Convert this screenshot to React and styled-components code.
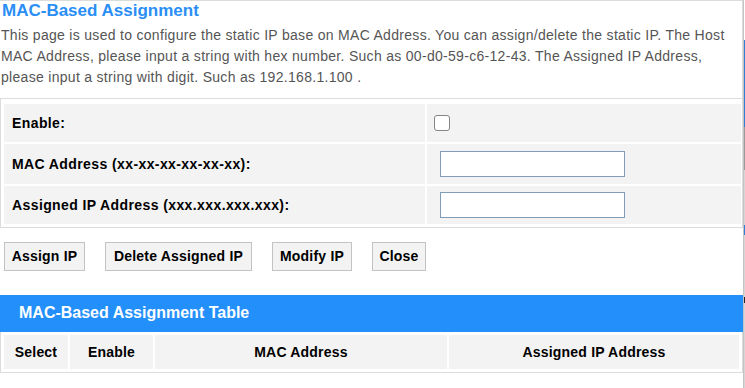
import React from "react";
import styled, { createGlobalStyle } from "styled-components";

const GlobalStyle = createGlobalStyle`
  html, body { margin: 0; padding: 0; background: #fff; }
  body { font-family: "Liberation Sans", Arial, sans-serif; }
  * { box-sizing: border-box; }
`;

const Page = styled.div`
  display: flex;
  width: 745px;
  height: 388px;
  overflow: hidden;
`;

const Main = styled.div`
  width: 743px;
  flex: none;
  display: flex;
  flex-direction: column;
`;

const EdgeStrip = styled.div`
  width: 2px;
  flex: none;
  display: flex;
`;

const EdgeLine = styled.div`
  width: 1px;
  height: 388px;
  background: ${(p) => p.$bg};
`;

const Intro = styled.div`
  border-top: 1px solid #dcdcdc;
  border-right: 1px solid #dcdcdc;
  border-bottom: 1px solid #dcdcdc;
  height: 99px;
  padding: 0 8px 0 1px;
`;

const Title = styled.div`
  color: #2a8ef5;
  font-weight: bold;
  font-size: 17px;
  line-height: 20px;
  margin-bottom: 4px;
  padding-left: 1px;
`;

const Desc = styled.div`
  color: #555;
  font-size: 14px;
  line-height: 21px;
  letter-spacing: 0.3px;
`;

const FormGrid = styled.div`
  display: grid;
  grid-template-columns: 421px 1fr;
  gap: 2px;
  border: 1px solid #dcdcdc;
  border-top: none;
  padding: 5px 1px 3px 3px;
`;

const Cell = styled.div`
  background: #f3f3f3;
  height: ${(p) => p.$h}px;
  display: flex;
  align-items: center;
  padding-left: ${(p) => p.$pl || 8}px;
  font-size: 14px;
  font-weight: ${(p) => (p.$bold ? "bold" : "normal")};
  letter-spacing: 0.4px;
  color: #000;
`;

const CheckBox = styled.span`
  display: inline-block;
  width: 16px;
  height: 16px;
  border: 1.5px solid #858585;
  border-radius: 3px;
  background: #fff;
`;

const TextInput = styled.input`
  width: 185px;
  height: 26px;
  border: 1px solid #7f9db9;
  background: #fff;
  padding: 0 4px;
  font-size: 14px;
  font-family: inherit;
  outline: none;
`;

const ButtonRow = styled.div`
  display: flex;
  gap: 20px;
  padding: 14px 0 0 4px;
  height: 67px;
`;

const Button = styled.button`
  width: ${(p) => p.$w}px;
  height: 29px;
  padding: 0 0 2px;
  background: #f3f3f3;
  border: 1px solid #c3c3c3;
  border-radius: 0;
  font-family: inherit;
  font-weight: bold;
  font-size: 14px;
  letter-spacing: 0.2px;
  color: #000;
  cursor: pointer;
`;

const TableBar = styled.div`
  height: 37px;
  background: #238ffa;
  color: #fff;
  font-weight: bold;
  font-size: 16px;
  display: flex;
  align-items: center;
  padding-left: 19px;
  padding-bottom: 1px;
`;

const ListGrid = styled.div`
  display: grid;
  grid-template-columns: 64px 83px 292px 1fr;
  gap: 2px;
  border: 1px solid #dcdcdc;
  border-top: none;
  padding: 3px;
`;

const HeadCell = styled.div`
  background: #f3f3f3;
  height: 34px;
  display: flex;
  align-items: center;
  justify-content: center;
  font-size: 14px;
  font-weight: bold;
  letter-spacing: 0.2px;
  color: #000;
`;

export default function App() {
  return (
    <>
      <GlobalStyle />
      <Page>
        <Main>
          <Intro>
            <Title>MAC-Based Assignment</Title>
            <Desc>
              This page is used to configure the static IP base on MAC Address. You can assign/delete the static IP. The Host MAC Address, please input a string with hex number. Such as 00-d0-59-c6-12-43. The Assigned IP Address, please input a string with digit. Such as 192.168.1.100 .
            </Desc>
          </Intro>
          <FormGrid>
            <Cell $h={38} $bold>Enable:</Cell>
            <Cell $h={38} $pl={7}><CheckBox /></Cell>
            <Cell $h={40} $bold>MAC Address (xx-xx-xx-xx-xx-xx):</Cell>
            <Cell $h={40} $pl={13}><TextInput /></Cell>
            <Cell $h={38} $bold>Assigned IP Address (xxx.xxx.xxx.xxx):</Cell>
            <Cell $h={38} $pl={13}><TextInput /></Cell>
          </FormGrid>
          <ButtonRow>
            <Button $w={81}>Assign IP</Button>
            <Button $w={147}>Delete Assigned IP</Button>
            <Button $w={80}>Modify IP</Button>
            <Button $w={54}>Close</Button>
          </ButtonRow>
          <TableBar>MAC-Based Assignment Table</TableBar>
          <ListGrid>
            <HeadCell>Select</HeadCell>
            <HeadCell>Enable</HeadCell>
            <HeadCell>MAC Address</HeadCell>
            <HeadCell>Assigned IP Address</HeadCell>
          </ListGrid>
        </Main>
        <EdgeStrip>
          <EdgeLine $bg="#c4c4c4" />
          <EdgeLine $bg="linear-gradient(to bottom, #fff 0 40px, #2f7fd6 40px 127px, #9a9a9a 127px 170px, #d6d6d6 170px 225px, #2f7fd6 225px 235px, #d6d6d6 235px 297px, #222 297px 303px, #d6d6d6 303px)" />
        </EdgeStrip>
      </Page>
    </>
  );
}
